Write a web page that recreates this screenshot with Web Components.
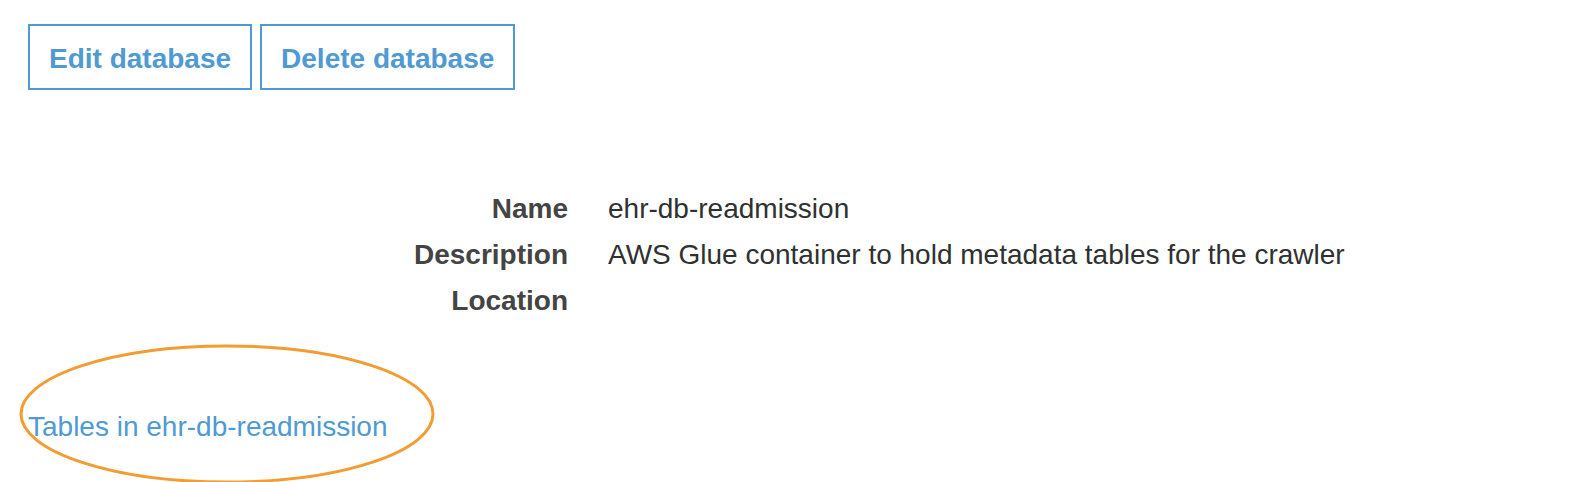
<!DOCTYPE html>
<html lang="en"><head><meta charset="utf-8"><title>Database details</title>
<style>
body{margin:0;font-family:"Liberation Sans",Arial,sans-serif;font-size:28px;line-height:46px;color:#2f3131;background:#fff}
</style></head><body>
<database-page></database-page>
<script>
class ActionButton extends HTMLElement{
  constructor(){super();this.attachShadow({mode:"open"}).innerHTML=`
<style>:host{display:block}
button{display:block;font:bold 28px/32px "Liberation Sans",Arial,sans-serif;color:#4f9ad3;background:#fff;border:2px solid #4f9ad3;border-radius:0;padding:17px 19px 13px;margin:0;white-space:nowrap;cursor:pointer}
</style><button type="button"><slot></slot></button>`}
}
customElements.define("action-button",ActionButton);
class DetailRow extends HTMLElement{
  constructor(){super();this.attachShadow({mode:"open"}).innerHTML=`
<style>:host{display:grid;grid-template-columns:minmax(0,540fr) minmax(0,934fr);column-gap:40px;min-height:46px}
.label{font-weight:bold;text-align:right;color:#444}
</style><div class="label"><slot name="label"></slot></div><div><slot></slot></div>`}
}
customElements.define("detail-row",DetailRow);
class CircledLink extends HTMLElement{
  constructor(){super();this.attachShadow({mode:"open"}).innerHTML=`
<style>:host{display:block;position:relative;width:fit-content}
a{color:#4f9ad3;text-decoration:none}
svg{position:absolute;left:-10px;top:-61px;width:418px;height:142px;pointer-events:none}
</style><a href="#tables"><slot></slot></a>
<svg viewBox="0 0 418 142" aria-hidden="true"><ellipse cx="209" cy="71" rx="206" ry="68" fill="none" stroke="#f39c32" stroke-width="3"/></svg>`}
}
customElements.define("circled-link",CircledLink);
class DatabasePage extends HTMLElement{
  constructor(){super();this.attachShadow({mode:"open"}).innerHTML=`
<style>:host{display:block;padding:24px 28px 0;overflow:hidden}
.actions{display:flex;gap:8px}
.details{margin-top:96px}
circled-link{margin-top:80px;margin-bottom:32px}
</style>
<div class="actions"><action-button>Edit database</action-button><action-button>Delete database</action-button></div>
<div class="details">
<detail-row><span slot="label">Name</span>ehr-db-readmission</detail-row>
<detail-row><span slot="label">Description</span>AWS Glue container to hold metadata tables for the crawler</detail-row>
<detail-row><span slot="label">Location</span></detail-row>
</div>
<circled-link>Tables in ehr-db-readmission</circled-link>`}
}
customElements.define("database-page",DatabasePage);
</script></body></html>
